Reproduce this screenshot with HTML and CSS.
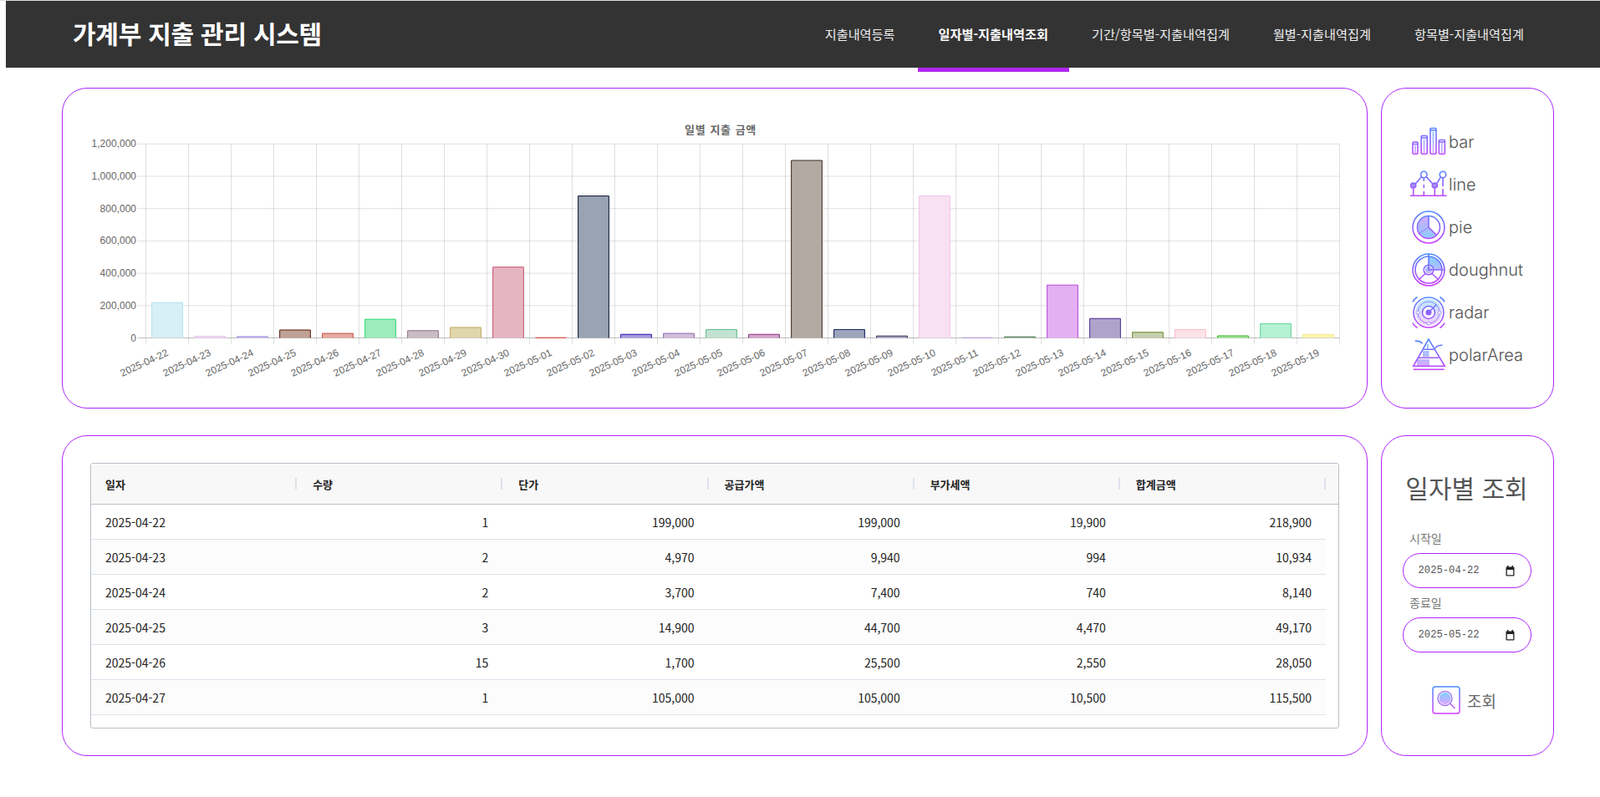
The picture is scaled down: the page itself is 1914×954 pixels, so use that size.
FILE: index.html
```html
<!DOCTYPE html>
<html lang="ko">
<head>
    <meta charset="utf-8">
    <title>가계부 지출 관리 시스템</title>
    <link rel="stylesheet" href="styles.css">
</head>

<body>
    <!-- shared gradients for all the icons -->
    <svg class="icon-defs" width="0" height="0">
        <defs>
            <linearGradient id="stroke44" gradientUnits="userSpaceOnUse" x1="0" y1="2" x2="0" y2="42">
                <stop offset="0" stop-color="#4a8cff"/>
                <stop offset="1" stop-color="#d13cff"/>
            </linearGradient>
            <linearGradient id="fill44" gradientUnits="userSpaceOnUse" x1="0" y1="4" x2="0" y2="40">
                <stop offset="0" stop-color="#7fd0ff"/>
                <stop offset="1" stop-color="#e3a6ff"/>
            </linearGradient>
            <linearGradient id="fillFlip" gradientUnits="userSpaceOnUse" x1="0" y1="8" x2="0" y2="36">
                <stop offset="0" stop-color="#d7a8fb"/>
                <stop offset="1" stop-color="#86cdff"/>
            </linearGradient>
        </defs>
    </svg>

    <header class="topbar">
        <h1 class="brand">가계부 지출 관리 시스템</h1>
        <ul class="nav">
            <li class="nav-item"><a href="#">지출내역등록</a></li>
            <li class="nav-item active"><a href="#">일자별-지출내역조회</a></li>
            <li class="nav-item"><a href="#">기간/항목별-지출내역집계</a></li>
            <li class="nav-item"><a href="#">월별-지출내역집계</a></li>
            <li class="nav-item"><a href="#">항목별-지출내역집계</a></li>
        </ul>
    </header>

    <main class="board">
        <section class="card chart-card">
            <svg id="chart" class="chart" width="1560" height="382"></svg>
        </section>

        <section class="card type-card">
            <ul class="type-list">
                <li class="type-row">
                    <svg class="type-icon" viewBox="0 0 44 44">
                        <g class="ico-fill">
                            <rect x="5.2" y="26" width="1.8" height="9"/>
                            <rect x="15.6" y="19" width="2" height="16"/>
                            <rect x="26.5" y="10" width="2" height="25"/>
                            <rect x="36.8" y="23" width="2" height="12"/>
                        </g>
                        <g class="ico-line">
                            <rect x="3" y="22" width="6" height="14.3" rx="1"/>
                            <rect x="13.2" y="14.5" width="7" height="21.8" rx="1"/>
                            <rect x="24" y="5.5" width="7" height="30.8" rx="1"/>
                            <rect x="34.4" y="19.5" width="7" height="16.8" rx="1"/>
                            <path d="M3 24.5h6M13.2 17h7M24 8h7M34.4 22h7"/>
                        </g>
                    </svg>
                    <span class="type-name">bar</span>
                </li>
                <li class="type-row">
                    <svg class="type-icon" viewBox="0 0 44 44">
                        <g class="ico-line">
                            <path d="M0 35.3h43.6"/>
                            <path d="M6.3 21l7.4-8.6M19 12.4l7.6 8.4M31.8 20.6l4.8-8"/>
                            <path d="M3.7 26.5v8.8M16.3 14v4M16.3 22v4M16.3 30v5.3M29.3 26.5v8.8M39 14v10M39 27v8.3"/>
                            <circle cx="3.7" cy="23" r="3" class="ico-solid"/>
                            <circle cx="16.3" cy="10" r="3.7"/>
                            <circle cx="29.3" cy="23" r="3" class="ico-solid"/>
                            <circle cx="39" cy="10" r="3.7"/>
                        </g>
                    </svg>
                    <span class="type-name">line</span>
                </li>
                <li class="type-row">
                    <svg class="type-icon" viewBox="0 0 44 44">
                        <path d="M22 22V9A13 13 0 1 0 31.5 31z" fill="url(#fillFlip)"/>
                        <g class="ico-line">
                            <circle cx="22" cy="22" r="19"/>
                            <circle cx="22" cy="22" r="13.5"/>
                            <path d="M22 8.5V22L31.5 31.5"/>
                            <path d="M22 22L9.5 30" class="ico-thin"/>
                        </g>
                    </svg>
                    <span class="type-name">pie</span>
                </li>
                <li class="type-row">
                    <svg class="type-icon" viewBox="0 0 44 44">
                        <path d="M22 6A16 16 0 0 1 38 22H28A6 6 0 0 0 22 16z" fill="url(#fill44)"/>
                        <circle cx="22" cy="22" r="4" fill="url(#fill44)"/>
                        <g class="ico-line">
                            <circle cx="22" cy="22" r="19"/>
                            <circle cx="22" cy="22" r="16"/>
                            <circle cx="22" cy="22" r="5.8"/>
                            <path d="M22 3v19h19"/>
                            <path d="M18 26.5l-7.5 7M26 26.5l7.5 7"/>
                        </g>
                    </svg>
                    <span class="type-name">doughnut</span>
                </li>
                <li class="type-row">
                    <svg class="type-icon" viewBox="0 0 44 44">
                        <circle cx="22" cy="22" r="12" class="ico-soft"/>
                        <circle cx="22" cy="22" r="3.5" fill="url(#stroke44)"/>
                        <g class="ico-line">
                            <circle cx="22" cy="22" r="18"/>
                            <path d="M9 22a13 13 0 0 1 26 0M9 22a13 13 0 0 0 26 0" class="ico-thin"/>
                            <circle cx="22" cy="22" r="7.5"/>
                            <path d="M22 22l9.5-9.5"/>
                            <path d="M3 9.5C4 7 6 5 8.5 3.500M41 9.500C40 7 38 5 35.500 3.500M3 34.500C4 37 6 39 8.500 40.500M41 34.500C40 37 38 39 35.500 40.500"/>
                        </g>
                        <g class="ico-dots">
                            <circle cx="9" cy="22" r="2"/>
                            <circle cx="35" cy="22" r="2"/>
                            <circle cx="22" cy="35" r="2"/>
                        </g>
                    </svg>
                    <span class="type-name">radar</span>
                </li>
                <li class="type-row">
                    <svg class="type-icon" viewBox="0 0 44 44">
                        <path d="M20 9h2v6h-2zM15 17h7.500v7H15zM8 27h15v8H8z" fill="url(#fill44)"/>
                        <g class="ico-line">
                            <path d="M22 3L3.700 35.300H41.300z"/>
                            <path d="M15.500 15.300h13M10 25.300h24"/>
                            <path d="M3.700 39.300h37"/>
                            <path d="M5.700 5.300c3-.5 6 0 9 3M29.500 14c2-3 5-4 9-3.800"/>
                        </g>
                    </svg>
                    <span class="type-name">polarArea</span>
                </li>
            </ul>
        </section>

        <section class="card table-card">
            <div class="grid">
                <div class="grid-head">
                    <div class="head-cell">일자</div>
                    <div class="head-cell">수량</div>
                    <div class="head-cell">단가</div>
                    <div class="head-cell">공급가액</div>
                    <div class="head-cell">부가세액</div>
                    <div class="head-cell">합계금액</div>
                </div>
                <div class="grid-body">
                    <div class="grid-row">
                        <div class="cell">2025-04-22</div><div class="cell num">1</div><div class="cell num">199,000</div><div class="cell num">199,000</div><div class="cell num">19,900</div><div class="cell num">218,900</div>
                    </div>
                    <div class="grid-row">
                        <div class="cell">2025-04-23</div><div class="cell num">2</div><div class="cell num">4,970</div><div class="cell num">9,940</div><div class="cell num">994</div><div class="cell num">10,934</div>
                    </div>
                    <div class="grid-row">
                        <div class="cell">2025-04-24</div><div class="cell num">2</div><div class="cell num">3,700</div><div class="cell num">7,400</div><div class="cell num">740</div><div class="cell num">8,140</div>
                    </div>
                    <div class="grid-row">
                        <div class="cell">2025-04-25</div><div class="cell num">3</div><div class="cell num">14,900</div><div class="cell num">44,700</div><div class="cell num">4,470</div><div class="cell num">49,170</div>
                    </div>
                    <div class="grid-row">
                        <div class="cell">2025-04-26</div><div class="cell num">15</div><div class="cell num">1,700</div><div class="cell num">25,500</div><div class="cell num">2,550</div><div class="cell num">28,050</div>
                    </div>
                    <div class="grid-row">
                        <div class="cell">2025-04-27</div><div class="cell num">1</div><div class="cell num">105,000</div><div class="cell num">105,000</div><div class="cell num">10,500</div><div class="cell num">115,500</div>
                    </div>
                </div>
            </div>
        </section>

        <section class="card search-card">
            <h2 class="search-title">일자별 조회</h2>
            <label class="field-label" for="startDate">시작일</label>
            <div class="date-box">
                <input class="date-text" id="startDate" type="text" value="2025-04-22">
                <svg class="date-icon" viewBox="0 0 11 13">
                    <path d="M2 0h1.5v2H2zM7.500 0H9v2H7.500z"/>
                    <path d="M1.500 1.500h8a1 1 0 0 1 1 1v9a1 1 0 0 1-1 1h-8a1 1 0 0 1-1-1v-9a1 1 0 0 1 1-1zM1.800 5v6.200h7.400V5z" fill-rule="evenodd"/>
                </svg>
            </div>
            <label class="field-label second" for="endDate">종료일</label>
            <div class="date-box">
                <input class="date-text" id="endDate" type="text" value="2025-05-22">
                <svg class="date-icon" viewBox="0 0 11 13">
                    <path d="M2 0h1.5v2H2zM7.500 0H9v2H7.500z"/>
                    <path d="M1.500 1.500h8a1 1 0 0 1 1 1v9a1 1 0 0 1-1 1h-8a1 1 0 0 1-1-1v-9a1 1 0 0 1 1-1zM1.800 5v6.200h7.400V5z" fill-rule="evenodd"/>
                </svg>
            </div>
            <button class="search-btn" type="button">
                <svg class="search-icon" viewBox="0 0 34 34">
                    <defs>
                        <linearGradient id="btnStroke" x1="0" y1="0" x2="0" y2="1">
                            <stop offset="0" stop-color="#4a8cff"/>
                            <stop offset="1" stop-color="#d13cff"/>
                        </linearGradient>
                        <linearGradient id="btnFill" x1="0" y1="0" x2="0" y2="1">
                            <stop offset="0" stop-color="#7fd0ff"/>
                            <stop offset="1" stop-color="#dca4ff"/>
                        </linearGradient>
                    </defs>
                    <rect x="1" y="1" width="32" height="32" rx="3" fill="none" stroke="url(#btnStroke)" stroke-width="1.5"/>
                    <circle cx="15.5" cy="15" r="7" fill="url(#btnFill)"/>
                    <circle cx="15.5" cy="15" r="8.5" fill="none" stroke="#a77bf5" stroke-width="1.5"/>
                    <path d="M21.5 21l6 6" fill="none" stroke="#b565f7" stroke-width="1.6"/>
                </svg>
                <span>조회</span>
            </button>
        </section>
    </main>

    <script src="chart.js"></script>
</body>

</html>
```

FILE: styles.css
```css
* {
    box-sizing: border-box;
}
body {
    margin: 0;
    border-top: 1px solid #ddd;
    background-color: #fff;
    font-family: "Noto Sans CJK KR", "Noto Sans", sans-serif;
    color: #222;
}
.icon-defs {
    position: absolute;
}

/* top bar */
.topbar {
    display: flex;
    justify-content: space-between;
    align-items: flex-start;
    height: 80px;
    margin-left: 7px;
    padding: 0 66px 0 80px;
    background-color: #333;
}
.brand {
    margin: 0;
    font-size: 30px;
    font-weight: 700;
    letter-spacing: -0.25px;
    line-height: 76px;
    color: #fff;
}
.nav {
    display: flex;
    gap: 2px;
    margin: 0;
    padding: 0;
    list-style: none;
}
.nav-item {
    height: 85px;
    padding: 0 25px;
}
.nav-item a {
    font-size: 15.2px;
    line-height: 78px;
    color: #eee;
    text-decoration: none;
}
.nav-item.active {
    border-bottom: 5px solid #b026f2;
}
.nav-item.active a {
    font-weight: 700;
    color: #fff;
}

/* main board */
.board {
    display: grid;
    grid-template-columns: 1562px 207px;
    grid-template-rows: 384px 384px;
    gap: 32px 16px;
    padding: 24px 0 0 74px;
}
.card {
    border: 1px solid #b026ff;
    border-radius: 30px;
    background-color: #fff;
}
.chart {
    display: block;
}
.chart text {
    font-family: "Liberation Sans", Arial, sans-serif;
    font-size: 12px;
    fill: #666;
}
.chart .chart-title {
    font-family: "Noto Sans CJK KR", sans-serif;
    font-weight: 700;
    font-size: 13px;
    letter-spacing: 0.6px;
    word-spacing: 1px;
}

/* chart type list */
.type-list {
    display: flex;
    flex-direction: column;
    gap: 7px;
    margin: 0;
    padding: 42px 0 0 34px;
    list-style: none;
}
.type-row {
    display: flex;
    align-items: center;
    gap: 2px;
    height: 44px;
}
.type-icon {
    width: 44px;
    height: 44px;
    flex: none;
}
.type-name {
    font-family: Inter, "Noto Sans", sans-serif;
    font-size: 20px;
    font-weight: 300;
    color: #555;
}
.ico-line {
    fill: none;
    stroke: url(#stroke44);
    stroke-width: 1.6;
}
.ico-fill {
    fill: url(#fill44);
}
.ico-thin {
    stroke-width: 0.8;
}
.ico-solid {
    fill: #a98df5;
}
.ico-soft {
    fill: none;
    stroke: url(#fill44);
    stroke-width: 8;
    opacity: 0.5;
}
.ico-dots circle {
    fill: #fff;
    stroke: #b69af8;
    stroke-width: 1;
}

/* table */
.table-card {
    padding: 32px 33px;
}
.grid {
    height: 318px;
    border: 1px solid #babfc7;
    border-radius: 3px;
    font-size: 14px;
}
.grid-head {
    display: grid;
    grid-template-columns: repeat(6, 1fr);
    align-items: center;
    height: 49px;
    padding-right: 15px;
    border-bottom: 1px solid #babfc7;
    background-color: #f8f8f8;
}
.head-cell {
    display: flex;
    justify-content: space-between;
    align-items: center;
    padding-left: 19px;
    font-size: 13px;
    font-weight: 700;
}
.head-cell:first-child {
    padding-left: 17px;
}
.head-cell::after {
    content: "";
    width: 2px;
    height: 14px;
    background-color: #dde2eb;
}
.grid-body {
    padding-right: 15px;
}
.grid-row {
    display: grid;
    grid-template-columns: repeat(6, 1fr);
    align-items: center;
    height: 42px;
    border-bottom: 1px solid #dde2eb;
}
.grid-row:nth-child(even) {
    background-color: #fcfcfc;
}
.cell {
    padding: 0 17px;
}
.num {
    text-align: right;
}

/* search form */
.search-card {
    display: flex;
    flex-direction: column;
    align-items: center;
    padding: 41px 2px 0 0;
}
.search-title {
    margin: 0 0 31px;
    font-size: 30px;
    font-weight: 400;
    line-height: 40px;
    color: #555;
}
.field-label {
    align-self: flex-start;
    margin: 0 0 8px 33px;
    font-size: 14px;
    line-height: 20px;
    color: #777;
}
.field-label.second {
    margin-top: 7px;
}
.date-box {
    display: flex;
    align-items: center;
    justify-content: space-between;
    width: 154px;
    height: 42px;
    padding: 0 19px 0 18px;
    border: 1px solid #b026ff;
    border-radius: 21px;
}
.date-text {
    width: 80px;
    padding: 0;
    border: none;
    outline: none;
    font-family: "Liberation Mono", monospace;
    font-size: 12.2px;
    color: #555;
}
.date-icon {
    width: 11px;
    height: 13px;
    fill: #222;
}
.search-btn {
    display: flex;
    align-items: center;
    gap: 8px;
    margin-top: 40px;
    padding: 0 6px 0 0;
    border: none;
    background: none;
    font-family: inherit;
    font-size: 19px;
    color: #666;
}
.search-icon {
    width: 34px;
    height: 34px;
}
```

FILE: chart.js
```js
var days = ['04-22','04-23','04-24','04-25','04-26','04-27','04-28','04-29','04-30','05-01','05-02','05-03','05-04','05-05',
    '05-06','05-07','05-08','05-09','05-10','05-11','05-12','05-13','05-14','05-15','05-16','05-17','05-18','05-19'];

// value, fill, border
var bars = [
    [218900, '#d7eff6', '#aee1f0'], [10934, '#f3dbf7', '#e8c5f0'], [8140, '#d5ccf0', '#9b7fd9'], [49170, '#c0a195', '#5a1a0a'],
    [28050, '#e8a9a0', '#c0503f'], [115500, '#9decbc', '#2ed573'], [45000, '#c9bcc4', '#8a6f7e'], [65000, '#e0d6ac', '#c2aa5c'],
    [438000, '#e6b5c2', '#c4506f'], [1500, '#f5d0c8', '#d03020'], [878000, '#99a3b3', '#03132e'], [22000, '#a79cdd', '#2a0ab0'],
    [28000, '#d2bcdc', '#9168a8'], [52000, '#c1e3d0', '#5fbd88'], [22000, '#d3a5cc', '#8e2a80'], [1098000, '#b3a9a3', '#3b2a1e'],
    [52000, '#9ca5bb', '#0a1a58'], [12000, '#aaa8c0', '#2d2858'], [878000, '#f7e1f3', '#efc0e8'], [1000, '#e0d8f0', '#b090e0'],
    [7000, '#a8c0a8', '#40704a'], [327000, '#e3b0f2', '#b845d8'], [120000, '#b0a3cb', '#452a90'], [35000, '#c5cfac', '#6b8a30'],
    [52000, '#fde3e8', '#fdb9c8'], [13000, '#a8e8a0', '#2cb81c'], [88000, '#b5f0d3', '#5fd59c'], [22000, '#fbf3b0', '#f5e98a']
];

var svg = document.getElementById('chart');
var NS = 'http://www.w3.org/2000/svg';
var left = 99.5, right = 1527.5, top0 = 66.3, zero = 298.5, max = 1200000;
var step = (right - left) / bars.length;

function add(name, attrs, text) {
    var el = document.createElementNS(NS, name);
    for (var k in attrs) el.setAttribute(k, attrs[k]);
    if (text) el.textContent = text;
    svg.appendChild(el);
    return el;
}

function line(x1, y1, x2, y2, color) {
    add('line', { x1: x1, y1: y1, x2: x2, y2: y2, stroke: color || 'rgba(0,0,0,0.12)', 'stroke-width': 1 });
}

add('text', { x: 787, y: 54, 'text-anchor': 'middle', class: 'chart-title' }, '일별 지출 금액');

// horizontal grid + y labels
for (var i = 0; i <= 6; i++) {
    var y = top0 + (zero - top0) * i / 6;
    line(90, y, right, y, i == 6 ? 'rgba(0,0,0,0.25)' : null);
    var label = (1200000 - i * 200000).toLocaleString('en-US');
    add('text', { x: 88, y: y + 4, 'text-anchor': 'end' }, label);
}

// vertical grid + x labels
for (var j = 0; j <= bars.length; j++) {
    line(left + j * step, top0, left + j * step, zero + 8);
}
days.forEach(function(d, n) {
    var x = left + (n + 0.5) * step + 2;
    add('text', { x: x, y: 319, 'text-anchor': 'end', transform: 'rotate(-25 ' + x + ' 319)' }, '2025-' + d);
});

// bars
var barWidth = step * 0.72;
bars.forEach(function(b, n) {
    var h = b[0] / max * (zero - top0);
    var x = left + (n + 0.5) * step - barWidth / 2;
    add('rect', { x: x, y: zero - h, width: barWidth, height: h, fill: b[1] });
    add('path', { d: 'M' + x + ' ' + zero + 'V' + (zero - h) + 'H' + (x + barWidth) + 'V' + zero, fill: 'none', stroke: b[2], 'stroke-width': 1 });
});
```
